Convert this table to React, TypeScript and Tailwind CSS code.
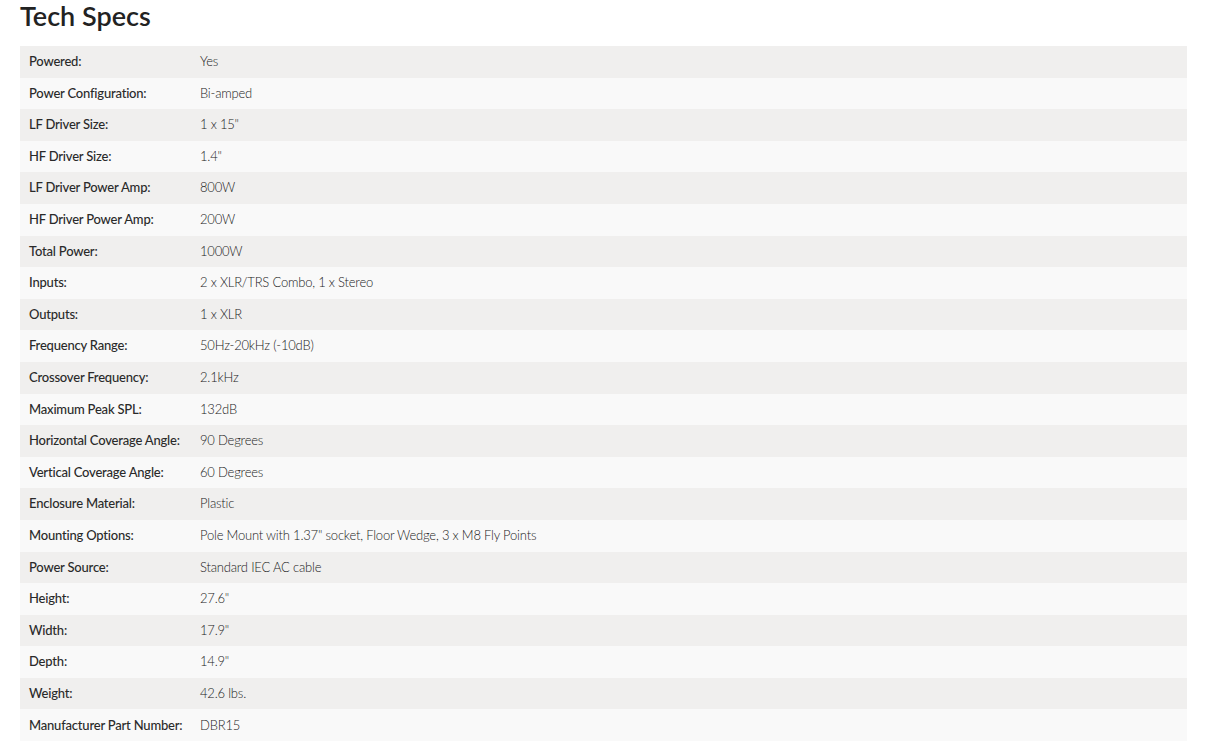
const specs: [string, string][] = [
  ["Powered:", "Yes"],
  ["Power Configuration:", "Bi-amped"],
  ["LF Driver Size:", "1 x 15\""],
  ["HF Driver Size:", "1.4\""],
  ["LF Driver Power Amp:", "800W"],
  ["HF Driver Power Amp:", "200W"],
  ["Total Power:", "1000W"],
  ["Inputs:", "2 x XLR/TRS Combo, 1 x Stereo"],
  ["Outputs:", "1 x XLR"],
  ["Frequency Range:", "50Hz-20kHz (-10dB)"],
  ["Crossover Frequency:", "2.1kHz"],
  ["Maximum Peak SPL:", "132dB"],
  ["Horizontal Coverage Angle:", "90 Degrees"],
  ["Vertical Coverage Angle:", "60 Degrees"],
  ["Enclosure Material:", "Plastic"],
  ["Mounting Options:", "Pole Mount with 1.37\" socket, Floor Wedge, 3 x M8 Fly Points"],
  ["Power Source:", "Standard IEC AC cable"],
  ["Height:", "27.6\""],
  ["Width:", "17.9\""],
  ["Depth:", "14.9\""],
  ["Weight:", "42.6 lbs."],
  ["Manufacturer Part Number:", "DBR15"],
];

export default function App() {
  return (
    <div className="min-h-screen bg-white px-5 font-['Lato',sans-serif]">
      <h2 className="text-[27px] font-semibold leading-[32px] text-[#222]">Tech Specs</h2>
      <table className="mt-[14px] w-full border-collapse">
        <tbody>
          {specs.map(([label, value], i) => (
            <tr key={label} className={i % 2 === 0 ? "bg-[#f0efee]" : "bg-[#f9f9f9]"}>
              <td className="h-[31.6px] w-[180px] pl-[9px] align-middle text-[13px] font-medium tracking-[-0.2px] text-[#2a2a2a]">
                {label}
              </td>
              <td className="h-[31.6px] align-middle text-[13px] font-light tracking-[-0.2px] text-[#222]">
                {value}
              </td>
            </tr>
          ))}
        </tbody>
      </table>
    </div>
  );
}
